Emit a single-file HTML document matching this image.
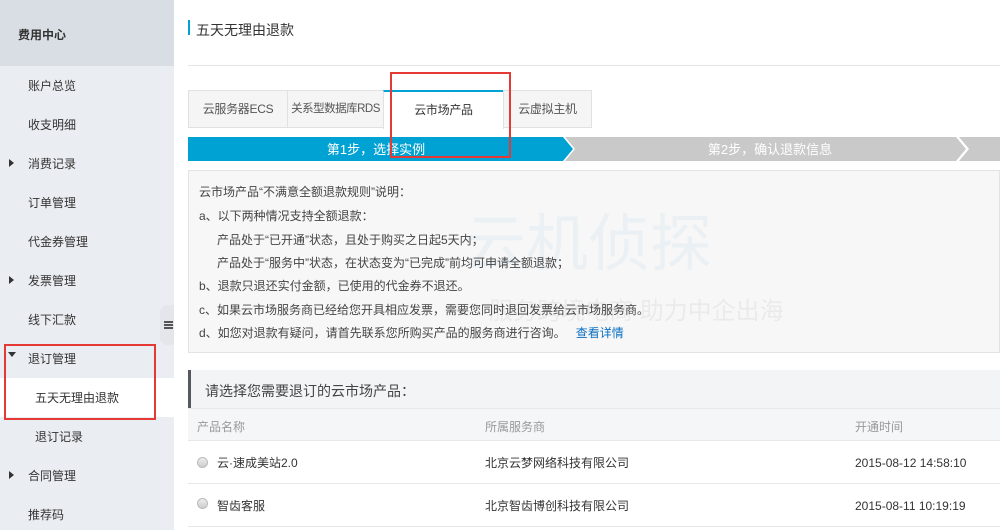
<!DOCTYPE html>
<html><head><meta charset="utf-8"><style>
*{margin:0;padding:0;box-sizing:border-box}
body{width:1000px;height:530px;overflow:hidden;background:#fff;font-family:"Liberation Sans","Noto Sans CJK SC",sans-serif;font-size:12px;color:#333;position:relative}
.a{position:absolute;white-space:nowrap}
.side{left:0;top:0;width:174px;height:530px;background:#eaedf1}
.sh{left:0;top:0;width:174px;height:66px;background:#d9dee4;font-weight:bold;padding:26px 0 0 18px;font-size:12px;color:#333}
.si{left:28px;font-size:12px;color:#333;line-height:14px}
.tri{left:9px;width:0;height:0;border-top:4px solid transparent;border-bottom:4px solid transparent;border-left:5px solid #333}
.tab{top:90px;height:38px;border:1px solid #e1e1e1;background:#f5f5f5;color:#555;text-align:center;line-height:36px;font-size:12px;letter-spacing:-0.3px}
.info{left:188px;top:170px;width:812px;height:183px;background:#f7f7f7;border:1px solid #e3e3e3}
.l{position:absolute;font-size:12px;color:#444;line-height:14px;white-space:nowrap}
.row{left:188px;width:812px;border-bottom:1px solid #e8e8e8}
.rad{width:11px;height:11px;border-radius:50%;border:1px solid #bbb;background:linear-gradient(#eee,#ccc)}
</style></head><body>
<div class="a side"></div>
<div class="a sh">费用中心</div>
<div class="a si" style="top:79px">账户总览</div>
<div class="a si" style="top:118px">收支明细</div>
<div class="a tri" style="top:159px"></div><div class="a si" style="top:157px">消费记录</div>
<div class="a si" style="top:196px">订单管理</div>
<div class="a si" style="top:235px">代金券管理</div>
<div class="a tri" style="top:276px"></div><div class="a si" style="top:274px">发票管理</div>
<div class="a si" style="top:313px">线下汇款</div>
<div class="a" style="left:8px;top:352px;width:0;height:0;border-left:4px solid transparent;border-right:4px solid transparent;border-top:5px solid #333"></div><div class="a si" style="top:352px">退订管理</div>
<div class="a" style="left:0;top:378px;width:174px;height:39px;background:#fff"></div>
<div class="a si" style="left:35px;top:391px">五天无理由退款</div>
<div class="a si" style="left:35px;top:430px">退订记录</div>
<div class="a tri" style="top:471px"></div><div class="a si" style="top:469px">合同管理</div>
<div class="a si" style="top:508px">推荐码</div>
<div class="a" style="left:160px;top:305px;width:14px;height:40px;background:#e3e6ea;border-radius:8px 0 0 8px"></div>
<div class="a" style="left:164px;top:321px;width:9px;height:8px;border-top:2px solid #555;border-bottom:2px solid #555"></div>
<div class="a" style="left:164px;top:324px;width:9px;height:2px;background:#555"></div>
<div class="a" style="left:4px;top:344px;width:152px;height:76px;border:2px solid #e53935"></div>

<div class="a" style="left:188px;top:20px;width:2px;height:15px;background:#00a2d4"></div>
<div class="a" style="left:196px;top:20px;font-size:14px;color:#333">五天无理由退款</div>
<div class="a" style="left:188px;top:65px;width:812px;height:1px;background:#e5e5e5"></div>

<div class="a tab" style="left:188px;width:100px">云服务器ECS</div>
<div class="a tab" style="left:287px;width:97px;font-size:11.5px;letter-spacing:-0.5px">关系型数据库RDS</div>
<div class="a tab" style="left:383px;width:121px;background:#fff;border-top:2px solid #00a2d4;border-bottom:none;color:#333;height:39px">云市场产品</div>
<div class="a tab" style="left:503px;width:89px">云虚拟主机</div>

<svg class="a" style="left:188px;top:137px" width="812" height="24">
<polygon points="0,0 375,0 385,12 375,24 0,24" fill="#00a2d4"/>
<polygon points="377,0 768,0 778,12 768,24 377,24 387,12" fill="#c9c9c9"/>
<polygon points="771,0 812,0 812,24 771,24 781,12" fill="#c9c9c9"/>
<text x="188" y="17" fill="#fff" font-size="13" text-anchor="middle" font-family="Liberation Sans,Noto Sans CJK SC,sans-serif">第1步，选择实例</text>
<text x="582" y="17" fill="#fff" font-size="13" text-anchor="middle" font-family="Liberation Sans,Noto Sans CJK SC,sans-serif">第2步，确认退款信息</text>
</svg>

<div class="a info">
<div class="a" style="left:275px;top:22px;font-size:62px;color:rgba(0,120,200,0.05)">云机侦探</div>
<div class="a" style="left:300px;top:120px;font-size:24px;color:rgba(0,0,0,0.05)">服务跨境电商 助力中企出海</div>
<div class="l" style="left:10px;top:14px">云市场产品“不满意全额退款规则”说明：</div>
<div class="l" style="left:10px;top:38px">a、以下两种情况支持全额退款：</div>
<div class="l" style="left:28px;top:62px">产品处于“已开通”状态，且处于购买之日起5天内；</div>
<div class="l" style="left:28px;top:85px">产品处于“服务中”状态，在状态变为“已完成”前均可申请全额退款；</div>
<div class="l" style="left:10px;top:108px">b、退款只退还实付金额，已使用的代金券不退还。</div>
<div class="l" style="left:10px;top:132px">c、如果云市场服务商已经给您开具相应发票，需要您同时退回发票给云市场服务商。</div>
<div class="l" style="left:10px;top:155px">d、如您对退款有疑问，请首先联系您所购买产品的服务商进行咨询。 &nbsp; <span style="color:#0a6fc2">查看详情</span></div>
</div>

<div class="a" style="left:188px;top:370px;width:812px;height:38px;background:#f3f4f6;border-left:3px solid #55585e"></div>
<div class="a" style="left:205px;top:381px;font-size:14px;color:#444">请选择您需要退订的云市场产品：</div>
<div class="a row" style="top:408px;height:33px;background:#f5f6f8;border-top:1px solid #e8e8e8"></div>
<div class="a" style="left:197px;top:418px;color:#999">产品名称</div>
<div class="a" style="left:485px;top:418px;color:#999">所属服务商</div>
<div class="a" style="left:855px;top:418px;color:#999">开通时间</div>
<div class="a row" style="top:441px;height:43px"></div>
<div class="a rad" style="left:197px;top:457px"></div>
<div class="a" style="left:217px;top:456px;line-height:14px">云·速成美站2.0</div>
<div class="a" style="left:485px;top:456px;line-height:14px">北京云梦网络科技有限公司</div>
<div class="a" style="left:855px;top:456px;line-height:14px">2015-08-12 14:58:10</div>
<div class="a row" style="top:484px;height:43px"></div>
<div class="a rad" style="left:197px;top:498px"></div>
<div class="a" style="left:217px;top:499px;line-height:14px">智齿客服</div>
<div class="a" style="left:485px;top:499px;line-height:14px">北京智齿博创科技有限公司</div>
<div class="a" style="left:855px;top:499px;line-height:14px">2015-08-11 10:19:19</div>

<div class="a" style="left:390px;top:72px;width:121px;height:86px;border:2px solid #e53935"></div>
</body></html>
